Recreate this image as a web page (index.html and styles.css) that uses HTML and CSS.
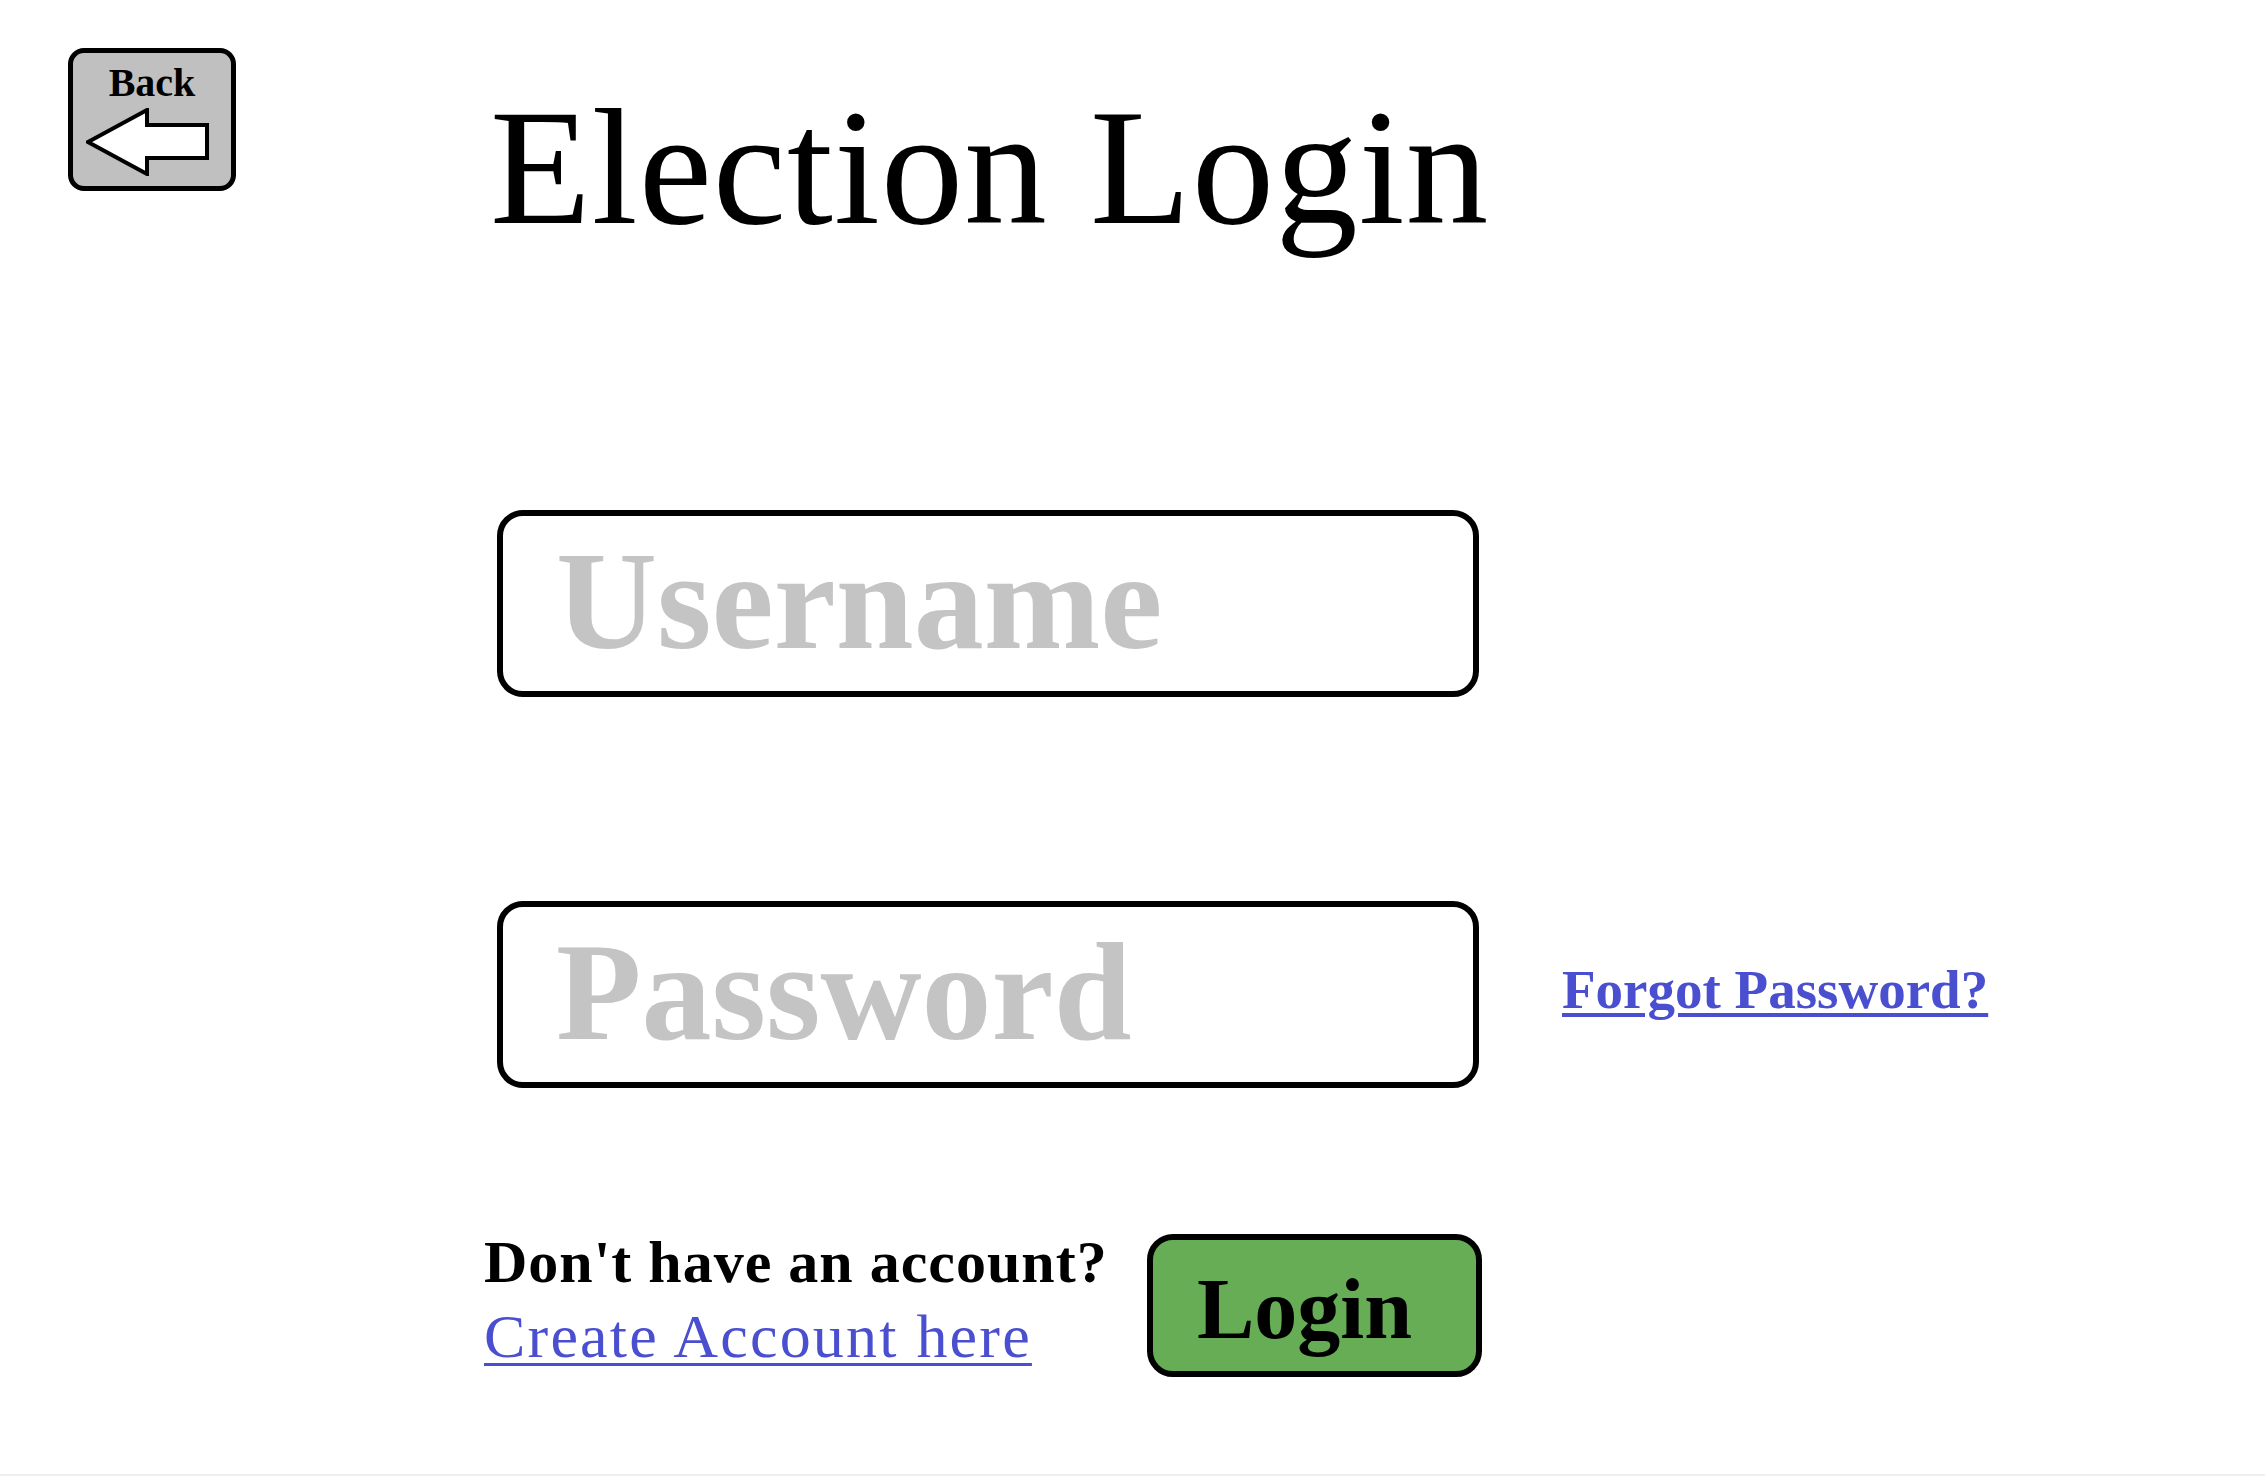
FILE: index.html
```
<!DOCTYPE html>
<html lang="en">
<head>
<meta charset="utf-8">
<title>Election Login</title>
<link rel="stylesheet" href="styles.css">
</head>
<body>
<div class="page">
  <header class="top">
    <a class="back" href="#">
      <span class="back-label">Back</span>
      <svg class="back-arrow" width="124" height="68" viewBox="0 0 124 68" aria-hidden="true">
        <polygon points="2,34 61,2 61,17 121,17 121,50 61,50 61,66" fill="#fff" stroke="#000" stroke-width="4" stroke-linejoin="miter"/>
      </svg>
    </a>
    <h1 class="title">Election Login</h1>
  </header>
  <main class="form">
    <div class="row">
      <input class="field" type="text" placeholder="Username">
    </div>
    <div class="row row-pass">
      <input class="field" type="password" placeholder="Password">
      <a class="forgot" href="#">Forgot Password?</a>
    </div>
    <div class="row-bottom">
      <div class="signup">
        <div class="signup-q">Don't have an account?</div>
        <a class="signup-link" href="#">Create Account here</a>
      </div>
      <button class="login" type="button">Login</button>
    </div>
  </main>
</div>
</body>
</html>
```
FILE: styles.css
```
html, body {
  margin: 0;
  padding: 0;
  background: #ffffff;
}

.page {
  box-sizing: border-box;
  height: 1476px;
  border-bottom: 2px solid #efefef;
  font-family: "Liberation Serif", "Times New Roman", serif;
  color: #000;
  overflow: hidden;
}

.top {
  display: flex;
  align-items: flex-start;
  padding: 48px 0 0 68px;
}

.back {
  box-sizing: border-box;
  width: 168px;
  height: 143px;
  border: 5px solid #000;
  border-radius: 16px;
  background: #c0c0c0;
  display: flex;
  flex-direction: column;
  align-items: center;
  text-decoration: none;
  color: #000;
}

.back-label {
  display: block;
  margin-top: 10px;
  font-family: "Liberation Serif", "Times New Roman", serif;
  font-weight: bold;
  font-size: 40px;
  line-height: 40px;
}

.back-arrow {
  display: block;
  margin-top: 5px;
  margin-right: 8px;
}

.title {
  margin: 37px 0 0 254px;
  font-family: "Liberation Serif", "Times New Roman", serif;
  font-weight: normal;
  font-size: 165px;
  line-height: 165px;
  letter-spacing: 1px;
}

.form {
  padding-left: 484px;
}

.row {
  display: flex;
  align-items: flex-start;
  margin-top: 260px;
}

.row-pass {
  margin-top: 204px;
}

.field {
  box-sizing: border-box;
  width: 982px;
  height: 187px;
  margin: 0 0 0 13px;
  border: 6px solid #000;
  border-radius: 26px;
  padding: 0 0 6px 53px;
  background: #fff;
  outline: none;
  font-family: "Liberation Serif", "Times New Roman", serif;
  font-weight: bold;
  font-size: 140px;
  color: #000;
}

.field::placeholder {
  color: #c4c4c4;
  opacity: 1;
}

.forgot {
  margin: 61px 0 0 83px;
  font-family: "Liberation Serif", "Times New Roman", serif;
  font-weight: bold;
  font-size: 55px;
  line-height: 56px;
  color: #4a4fd0;
  text-decoration: underline;
  text-decoration-thickness: 4px;
  text-underline-offset: 5px;
  white-space: nowrap;
}

.row-bottom {
  display: grid;
  grid-template-columns: 663px 335px;
  align-items: start;
  margin-top: 137px;
}

.signup-q {
  font-family: "Liberation Serif", "Times New Roman", serif;
  font-weight: bold;
  font-size: 60px;
  line-height: 74px;
  letter-spacing: 1px;
  white-space: nowrap;
}

.signup-link {
  display: inline-block;
  font-family: "Liberation Serif", "Times New Roman", serif;
  font-size: 62px;
  line-height: 74px;
  letter-spacing: 2.2px;
  color: #4a4fd0;
  text-decoration: underline;
  text-decoration-thickness: 3px;
  text-underline-offset: 6px;
  white-space: nowrap;
}

.login {
  box-sizing: border-box;
  width: 335px;
  height: 143px;
  margin-top: 9px;
  border: 6px solid #000;
  border-radius: 26px;
  background: #66ad55;
  padding: 26px 0 19px 44px;
  text-align: left;
  font-family: "Liberation Serif", "Times New Roman", serif;
  font-weight: bold;
  font-size: 86px;
  line-height: 86px;
  color: #000;
  cursor: pointer;
}
```
